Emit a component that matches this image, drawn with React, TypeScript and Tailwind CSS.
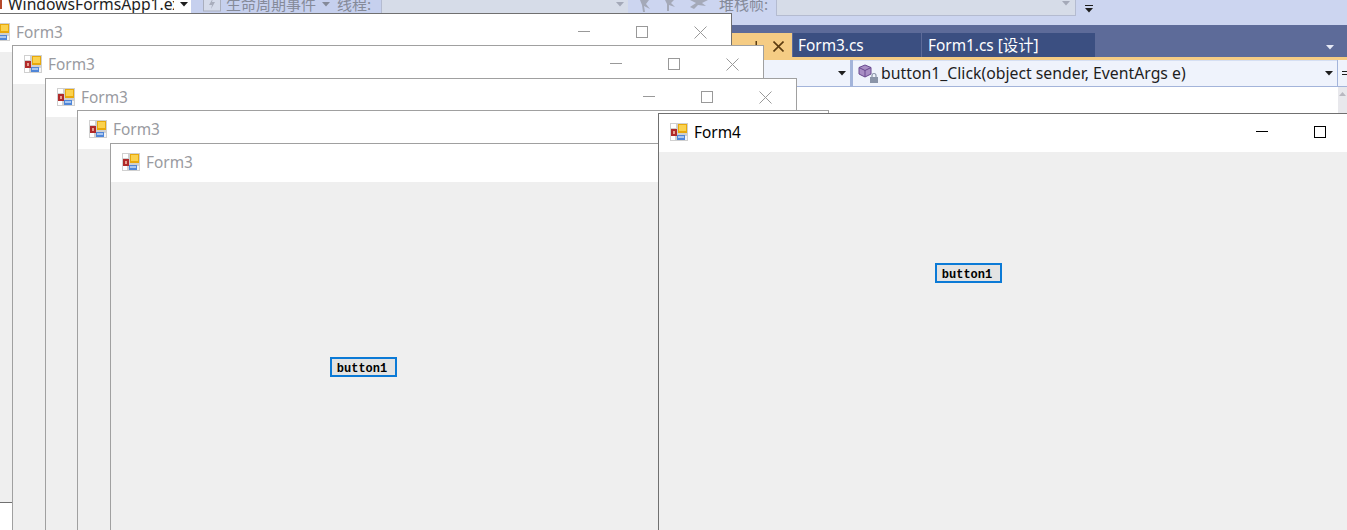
const sans = "font-['Noto_Sans','Open_Sans',sans-serif]";
const cjk = "font-['Noto_Sans','Noto_Sans_CJK_SC',sans-serif]";

function FormIcon() {
  return (
    <svg width="18" height="18" viewBox="0 0 18 18" className="shrink-0">
      <rect width="18" height="18" fill="#d0d0d0" />
      <rect x="1" y="1" width="5" height="4" fill="#ffffff" />
      <rect x="12" y="13" width="5" height="4" fill="#f4f4f4" />
      <rect x="1" y="13" width="4" height="4" fill="#ffffff" />
      <rect x="1" y="6" width="6" height="7" fill="#b02a2a" />
      <rect x="3" y="8" width="2" height="3" fill="#e8a090" />
      <rect x="8" y="1" width="9" height="9" fill="#e8a90c" />
      <rect x="9" y="2" width="7" height="6" fill="#fbd24e" />
      <rect x="7" y="12" width="8" height="5" fill="#4f86d8" />
      <rect x="8" y="13" width="6" height="2" fill="#a9c6f0" />
    </svg>
  );
}

type FormWindowProps = {
  title: string;
  left: number;
  top: number;
  active?: boolean;
  darkEdge?: boolean;
};

function FormWindow({ title, left, top, active, darkEdge }: FormWindowProps) {
  const stroke = active ? "#000000" : "#999999";
  return (
    <div
      className={`absolute flex h-[490px] w-[752px] flex-col border bg-white ${active || darkEdge ? "border-[#707070]" : "border-[#a0a0a0]"}`}
      style={{ left, top }}
    >
      <div className="flex h-[38px] items-center bg-white pr-[2px] pb-[2px] pl-[11px]">
        <FormIcon />
        <span className={`relative top-px ml-[6px] text-[15.4px] ${sans} ${active ? "text-black" : "text-[#999aa0]"}`}>{title}</span>
        <div className="ml-auto flex h-full items-center">
          <div className="flex w-[58px] justify-center">
            <svg width="12" height="12" viewBox="0 0 12 12">
              <path d="M0 5.5H12" stroke={stroke} strokeWidth="1" />
            </svg>
          </div>
          <div className="flex w-[58px] justify-center">
            <svg width="12" height="12" viewBox="0 0 12 12">
              <rect x="0.5" y="0.5" width="11" height="11" fill="none" stroke={stroke} />
            </svg>
          </div>
          <div className="flex w-[58px] justify-center">
            <svg width="13" height="13" viewBox="0 0 13 13">
              <path d="M0.5 0.5L12.5 12.5M12.5 0.5L0.5 12.5" stroke={stroke} strokeWidth="1" />
            </svg>
          </div>
        </div>
      </div>
      <div className="flex-1 bg-[#efefef]" />
    </div>
  );
}

function Button1({ left, top }: { left: number; top: number }) {
  return (
    <div
      className="absolute flex h-[20px] w-[67px] items-center justify-center border-2 border-[#0b7ad6] bg-[#e3e3e3] pt-[3px] pr-[3px] font-['Liberation_Mono',monospace] text-[12px] font-bold text-black"
      style={{ left, top }}
    >
      button1
    </div>
  );
}

function Caret({ color = "#1e1e1e" }: { color?: string }) {
  return (
    <svg width="8" height="5" viewBox="0 0 8 5" className="shrink-0">
      <path d="M0 0H8L4 4.5Z" fill={color} />
    </svg>
  );
}

function ToolbarFlags() {
  return (
    <svg width="72" height="13" viewBox="0 0 72 13" className="shrink-0">
      <path d="M0 0H9L6 4L10 9L4 6L5 12H3L2 5Z" fill="#a4a9b8" />
      <path d="M25 0H34L31 3L35 7L29 5L29 11H27L27 4Z" fill="#a4a9b8" />
      <path d="M50 0H68L62 3L66 6L58 5L54 9L50 7L56 3Z" fill="#a4a9b8" />
    </svg>
  );
}

export default function App() {
  return (
    <div className={`relative h-[530px] w-[1347px] overflow-hidden bg-white ${sans}`}>
      {/* toolbar */}
      <div className="flex h-[25px] items-start bg-[#ccd5f0]">
        <div className="flex h-[13px] w-[191px] shrink-0 overflow-hidden bg-white">
          <div className="h-[9px] w-[2px] shrink-0 bg-[#b5482a]" />
          <div className="ml-[6px] w-[166px] shrink-0 overflow-hidden">
            <span className="relative -top-[6px] block text-[15.7px] leading-[20px] whitespace-nowrap text-[#1e1e1e]">WindowsFormsApp1.exe</span>
          </div>
          <span className="mt-[2px] ml-auto mr-[3px] flex"><Caret /></span>
        </div>
        <div className="flex h-[13px] w-[190px] shrink-0 overflow-hidden bg-[#c6d0ee] pl-[12px] text-[#858a99]">
          <svg width="18" height="12" viewBox="0 0 18 12" className="shrink-0">
            <rect x="0.5" y="-4" width="17" height="15" fill="#d5dbea" stroke="#a9aebd" />
            <path d="M10 -2L6 5H9L8 9L12 2H9Z" fill="#a9aebd" />
          </svg>
          <span className="relative -top-[6px] ml-[5px] font-['Noto_Sans_CJK_SC',sans-serif] text-[15px] leading-[20px] whitespace-nowrap">生命周期事件</span>
          <span className="mt-[2px] ml-[6px] flex"><Caret color="#858a99" /></span>
          <span className="relative -top-[6px] ml-[7px] font-['Noto_Sans_CJK_SC',sans-serif] text-[15px] leading-[20px] whitespace-nowrap">线程:</span>
        </div>
        <div className="flex h-[13px] w-[247px] shrink-0 justify-end border-l border-[#b4bbd0] bg-[#d6dce8] pt-[2px] pr-[4px]">
          <Caret color="#a4a9b8" />
        </div>
        <div className="flex h-[13px] w-[148px] shrink-0 overflow-hidden pl-[12px] text-[#858a99]">
          <ToolbarFlags />
          <span className="relative -top-[6px] ml-[7px] font-['Noto_Sans_CJK_SC',sans-serif] text-[15px] leading-[20px] whitespace-nowrap">堆栈帧:</span>
        </div>
        <div className="flex h-[16px] w-[300px] shrink-0 justify-end border-r border-b border-l border-[#b4bbd0] bg-[#d6dce8] pt-[1px] pr-[5px]">
          <Caret color="#a4a9b8" />
        </div>
        <div className="ml-[9px] mt-[5px] flex shrink-0 flex-col items-center gap-[2px]">
          <div className="h-px w-[8px] bg-[#1e1e1e]" />
          <Caret />
        </div>
      </div>

      {/* tab well */}
      <div className="flex h-[32px] items-end bg-[#5d6b99] pl-[640px]">
        <div className="flex h-[24px] w-[152px] items-start justify-end bg-[#f5cc84] pt-[8px] pr-[8px]">
          <svg width="8" height="9" viewBox="0 0 8 9" className="mr-[13px]">
            <path d="M3.5 0H5V5H8V6.5H0V5H3.5Z" fill="#5c3c10" />
          </svg>
          <svg width="11" height="11" viewBox="0 0 11 11">
            <path d="M0.5 0.5L10.5 10.5M10.5 0.5L0.5 10.5" stroke="#5c3c10" strokeWidth="1.6" />
          </svg>
        </div>
        <div className="ml-px flex h-[24px] w-[128px] items-center bg-[#3b4f81] pl-[5px] text-[15.4px] text-white"><span className="relative top-px">Form3.cs</span></div>
        <div className={`ml-px flex h-[24px] w-[173px] items-center bg-[#3b4f81] pl-[6px] text-[15.4px] text-white ${cjk}`}><span className="relative top-px">Form1.cs [设计]</span></div>
        <div className="mb-[7px] ml-auto mr-[13px] flex"><Caret color="#e6e9f5" /></div>
      </div>
      <div className="h-[3px] bg-[#f5cc84]" />

      {/* nav bar */}
      <div className="flex h-[27px] bg-[#a3b4da] pb-px">
        <div className="flex w-[850px] items-center justify-end bg-[#eff3fc] pr-[4px]">
          <Caret />
        </div>
        <div className="ml-[3px] flex w-[484px] items-center border-t border-[#d5dff3] bg-[#eff3fc] pl-[5px] text-[15.8px] text-[#1e1e1e]">
          <svg width="21" height="20" viewBox="0 0 21 20" className="mr-[2px] shrink-0">
            <path d="M7 1L13 3.5V10L7 13L1 10V3.5Z" fill="#a88ec4" stroke="#68488f" />
            <path d="M1 3.5L7 6.5L13 3.5M7 6.5V13" fill="none" stroke="#68488f" />
            <rect x="12" y="13" width="8" height="6" fill="#8a94a8" />
            <path d="M14 13V11.5A2 2 0 0 1 18 11.5V13" fill="none" stroke="#8a94a8" strokeWidth="1.2" />
          </svg>
          <span>button1_Click(object sender, EventArgs e)</span>
          <span className="ml-auto mr-[4px] flex"><Caret /></span>
        </div>
        <div className="ml-[1px] flex flex-1 flex-col items-end justify-center gap-[2px] bg-[#eff3fc]">
          <div className="h-px w-[5px] bg-[#1e1e1e]" />
          <div className="h-px w-[5px] bg-[#1e1e1e]" />
        </div>
      </div>

      {/* editor scrollbar */}
      <div className="absolute top-[87px] right-0 flex h-[30px] w-[9px] justify-center bg-[#e8e8ec] pt-[5px]">
        <svg width="7" height="4" viewBox="0 0 7 4">
          <path d="M3.5 0L7 4H0Z" fill="#b8b8c0" />
        </svg>
      </div>

      <FormWindow title="Form3" left={-20} top={13} darkEdge />
      <FormWindow title="Form3" left={12} top={45} />
      <FormWindow title="Form3" left={45} top={78} />
      <FormWindow title="Form3" left={77} top={110} />
      <FormWindow title="Form3" left={110} top={143} />
      <FormWindow title="Form4" left={658} top={113} active />

      <Button1 left={330} top={357} />
      <Button1 left={935} top={263} />
    </div>
  );
}
